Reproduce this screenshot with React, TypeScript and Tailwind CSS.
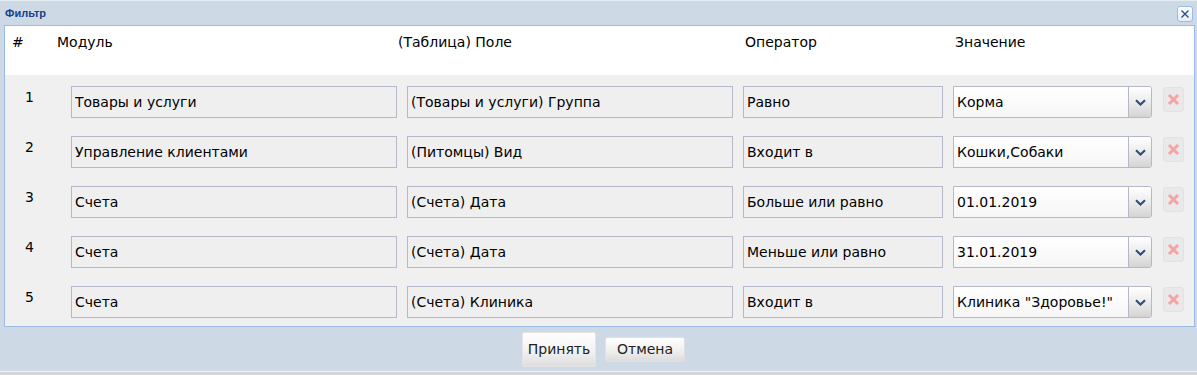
import React from 'react';

const rows = [
  { n: 1, module: 'Товары и услуги', field: '(Товары и услуги) Группа', op: 'Равно', value: 'Корма' },
  { n: 2, module: 'Управление клиентами', field: '(Питомцы) Вид', op: 'Входит в', value: 'Кошки,Собаки' },
  { n: 3, module: 'Счета', field: '(Счета) Дата', op: 'Больше или равно', value: '01.01.2019' },
  { n: 4, module: 'Счета', field: '(Счета) Дата', op: 'Меньше или равно', value: '31.01.2019' },
  { n: 5, module: 'Счета', field: '(Счета) Клиника', op: 'Входит в', value: 'Клиника "Здоровье!"' },
];

function Chevron() {
  return (
    <svg width="11" height="7" viewBox="0 0 11 7">
      <path d="M1 1.2 L5.5 5.5 L10 1.2" fill="none" stroke="#2e4e7e" strokeWidth="2.2" />
    </svg>
  );
}

function RowField({ text, width }: { text: string; width: string }) {
  return (
    <div className={`${width} h-[32px] shrink-0 border border-[#b5b8c8] bg-[#efefef] pl-[3px] flex items-center`}>
      <span className="truncate">{text}</span>
    </div>
  );
}

export default function App() {
  return (
    <div className="w-[1197px] h-[375px] bg-[#d6d6d6] font-['DejaVu_Sans',sans-serif] text-[14px] text-black overflow-hidden">
      <div className="h-[372px] bg-[#ced9e6] border-t border-[#e4ecf5] border-b border-b-[#eef2f7] flex flex-col pl-[4px] pr-[2px]">
        {/* Title bar */}
        <div className="h-[24px] shrink-0 flex items-center justify-between">
          <span className="text-[11px] font-bold text-[#15428b] font-['Liberation_Sans',sans-serif] pl-[1px] pt-[1px]">Фильтр</span>
          <button className="w-[16px] h-[16px] mr-[2px] mt-[1px] rounded-[3px] border border-[#99bbe8] bg-gradient-to-b from-white to-[#e6eef8] flex items-center justify-center">
            <svg width="10" height="10" viewBox="0 0 10 10">
              <path d="M1.5 1.5 L8.5 8.5 M8.5 1.5 L1.5 8.5" stroke="#2b4f86" strokeWidth="1.4" />
            </svg>
          </button>
        </div>

        {/* Panel */}
        <div className="shrink-0 border border-[#99bbe8] flex flex-col">
          <div className="h-[49px] bg-white flex items-start pt-[6px]">
            <span className="w-[52px] pl-[7px]">#</span>
            <span className="w-[341px]">Модуль</span>
            <span className="w-[347px]">(Таблица) Поле</span>
            <span className="w-[210px]">Оператор</span>
            <span>Значение</span>
          </div>
          <div className="bg-[#f0f0f0] pt-[11px] pb-[8px] flex flex-col gap-[18px]">
            {rows.map(r => (
              <div key={r.n} className="h-[32px] flex items-start">
                <div className="w-[66px] shrink-0 pl-[20px] pt-[1px]">{r.n}</div>
                <RowField text={r.module} width="w-[326px]" />
                <div className="w-[10px] shrink-0" />
                <RowField text={r.field} width="w-[326px]" />
                <div className="w-[10px] shrink-0" />
                <RowField text={r.op} width="w-[200px]" />
                <div className="w-[10px] shrink-0" />
                <div className="w-[199px] h-[32px] shrink-0 flex border border-[#b5b8c8] rounded-r-[3px] overflow-hidden">
                  <div className="flex-1 bg-gradient-to-b from-white to-[#f6f6f6] pl-[3px] flex items-center">
                    <span className="truncate">{r.value}</span>
                  </div>
                  <div className="w-[23px] border-l border-[#b5b8c8] bg-gradient-to-b from-white via-[#ececec] to-[#d4d4d4] flex items-center justify-center">
                    <Chevron />
                  </div>
                </div>
                <div className="w-[11px] shrink-0" />
                <div className="w-[21px] h-[25px] mt-[1px] rounded-[3px] bg-[#e9e9e9] border border-[#e2e2e2] flex items-center justify-center">
                  <svg width="13" height="13" viewBox="0 0 13 13">
                    <path d="M2 2 L11 11 M11 2 L2 11" stroke="#f2a5a5" strokeWidth="3" />
                  </svg>
                </div>
              </div>
            ))}
          </div>
        </div>

        {/* Footer */}
        <div className="flex-1 flex items-center justify-center gap-[9px] pl-[8px]">
          <button className="w-[74px] h-[35px] rounded-[2px] border border-[#e4e4e4] bg-gradient-to-b from-white via-[#f3f3f3] to-[#dedede] text-[#222]">
            Принять
          </button>
          <button className="w-[80px] h-[25px] rounded-[2px] border border-[#e0e0e0] bg-gradient-to-b from-white via-[#f1f1f1] to-[#dcdcdc] text-[#222]">
            Отмена
          </button>
        </div>
      </div>
    </div>
  );
}
